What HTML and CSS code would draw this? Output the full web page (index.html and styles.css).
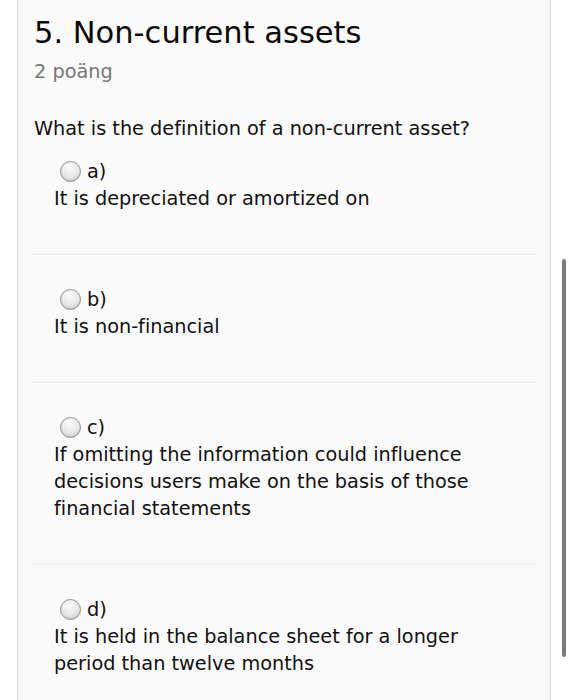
FILE: index.html
```html
<!DOCTYPE html>
<html lang="sv">
<head>
<meta charset="utf-8">
<title>Non-current assets</title>
<link rel="stylesheet" href="styles.css">
</head>
<body>
<div class="frame">
  <div class="gutter"></div>
  <main class="panel">
    <h1 class="title">5. Non-current assets</h1>
    <div class="points">2 poäng</div>
    <p class="question">What is the definition of a non-current asset?</p>
    <ul class="options">
      <li class="option">
        <label class="opt-label"><span class="radio"></span>a)</label>
        <div class="opt-text">It is depreciated or amortized on</div>
      </li>
      <li class="option">
        <label class="opt-label"><span class="radio"></span>b)</label>
        <div class="opt-text">It is non-financial</div>
      </li>
      <li class="option">
        <label class="opt-label"><span class="radio"></span>c)</label>
        <div class="opt-text">If omitting the information could influence decisions users make on the basis of those financial statements</div>
      </li>
      <li class="option">
        <label class="opt-label"><span class="radio"></span>d)</label>
        <div class="opt-text">It is held in the balance sheet for a longer period than twelve months</div>
      </li>
    </ul>
  </main>
  <div class="rail"><div class="scroll-thumb"></div></div>
</div>
</body>
</html>
```

FILE: styles.css
```css
html, body {
  margin: 0;
  padding: 0;
  background: #ffffff;
  height: 100%;
  overflow: hidden;
}

body {
  font-family: "DejaVu Sans", Verdana, sans-serif;
  color: #111111;
  font-variant-ligatures: none;
}

.frame {
  display: flex;
  height: 700px;
  position: relative;
}

.gutter {
  width: 17px;
  flex: none;
  background: #ffffff;
}

.panel {
  flex: none;
  width: 534px;
  box-sizing: border-box;
  background: #fafafa;
  border-left: 1px solid #dcdcdc;
  border-right: 1px solid #dedede;
  box-shadow: inset 1px 0 0 #f0f0f0, inset -1px 0 0 #efefef;
  padding: 15px 14px 0 16px;
}

.rail {
  flex: 1;
  background: #ffffff;
}

.scroll-thumb {
  position: absolute;
  left: 562px;
  top: 259px;
  width: 4px;
  height: 398px;
  border-radius: 2px;
  background: #7b7b7b;
}

.title {
  margin: 0;
  font-size: 30.5px;
  line-height: 36px;
  font-weight: normal;
  color: #0a0a0a;
}

.points {
  margin-top: 7px;
  font-size: 19.3px;
  line-height: 27px;
  color: #777777;
}

.question {
  margin: 30px 0 0;
  font-size: 19.3px;
  line-height: 27px;
}

.options {
  list-style: none;
  margin: 16px 0 0 -2px;
  padding: 0;
}

.option {
  padding: 0 0 41px 22px;
  border-bottom: 2px solid #efefef;
  font-size: 19.3px;
}

.option + .option {
  padding-top: 31px;
}

.opt-label {
  display: flex;
  align-items: center;
  height: 27px;
  padding-left: 6px;
  gap: 6px;
}

.radio {
  width: 21px;
  height: 21px;
  box-sizing: border-box;
  border-radius: 50%;
  border: 1px solid #8e8e8e;
  background: radial-gradient(circle at 45% 30%, #fdfdfd 0%, #e6e6e6 55%, #c9c9c9 100%);
  box-shadow: inset 0 -1px 1px rgba(0,0,0,0.08);
}

.opt-text {
  line-height: 27px;
  width: 420px;
}
```
